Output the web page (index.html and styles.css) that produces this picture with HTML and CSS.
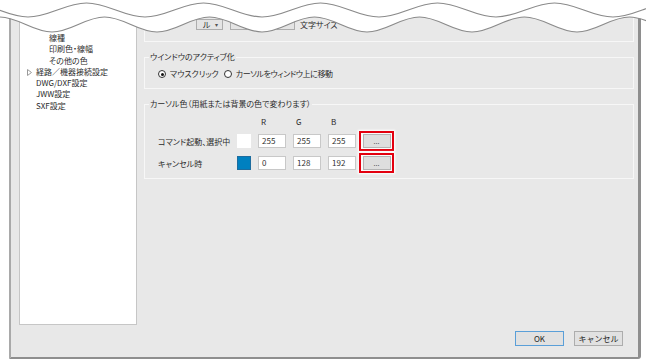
FILE: index.html
```html
<!DOCTYPE html>
<html lang="ja">
<head>
    <meta charset="UTF-8">
    <title>設定</title>
    <link rel="stylesheet" href="styles.css">
</head>
<body>

    <!-- Dialog -->
    <div class="dialog">
        <div class="main">

            <!-- Left tree -->
            <div class="tree">
                <div class="item lv2">線種</div>
                <div class="item lv2">印刷色・線幅</div>
                <div class="item lv2">その他の色</div>
                <div class="item lv1 closed">
                    <svg class="twisty" width="5" height="7" viewBox="0 0 5 7"><path d="M0.5 0.5 L4.5 3.5 L0.5 6.5 Z" fill="none" stroke="#9a9a9a" stroke-width="1"/></svg>経路／機器接続設定
                </div>
                <div class="item lv1">DWG/DXF設定</div>
                <div class="item lv1">JWW設定</div>
                <div class="item lv1">SXF設定</div>
            </div>

            <!-- Right panel -->
            <div class="panel">
                <div class="group group-top">
                    <div class="top-row">
                        <span class="combo">ル<span class="arrow">▾</span></span>
                        <span class="combo wide"></span>
                        <span class="top-label">文字サイズ</span>
                    </div>
                </div>

                <div class="group group-active">
                    <div class="group-title">ウインドウのアクティブ化</div>
                    <div class="radios">
                        <label class="radio"><span class="dot checked"></span>マウスクリック</label>
                        <label class="radio"><span class="dot"></span>カーソルをウィンドウ上に移動</label>
                    </div>
                </div>

                <div class="group group-color">
                    <div class="group-title">カーソル色（用紙または背景の色で変わります）</div>
                    <div class="color-grid">
                        <div class="head"></div>
                        <div class="head"></div>
                        <div class="head">R</div>
                        <div class="head">G</div>
                        <div class="head">B</div>
                        <div class="head"></div>

                        <div class="row-label">コマンド起動、選択中</div>
                        <div><span class="swatch" style="background:#ffffff"></span></div>
                        <div><span class="num">255</span></div>
                        <div><span class="num">255</span></div>
                        <div><span class="num">255</span></div>
                        <div class="mark"><span class="pick">...</span></div>

                        <div class="row-label">キャンセル時</div>
                        <div><span class="swatch blue" style="background:#0080c0"></span></div>
                        <div><span class="num">0</span></div>
                        <div><span class="num">128</span></div>
                        <div><span class="num">192</span></div>
                        <div class="mark"><span class="pick">...</span></div>
                    </div>
                </div>
            </div>
        </div>

        <!-- Footer buttons -->
        <div class="footer">
            <button class="btn default">OK</button>
            <button class="btn">キャンセル</button>
        </div>
    </div>

    <!-- torn top edge -->
    <svg class="tear" width="646" height="36" viewBox="0 0 646 36">
        <path d="M-53,32 C-34,32 -19.5,17 -0.5,17 S33,32 52,32 S85.5,17 104.5,17 S138,32 157,32 S190.5,17 209.5,17 S243,32 262,32 S295.5,17 314.5,17 S348,32 367,32 S400.5,17 419.5,17 S453,32 472,32 S505.5,17 524.5,17 S558,32 577,32 S610.5,17 629.5,17 S663,32 682,32 L682,0 L-53,0 Z" fill="#ffffff"/>
        <path d="M-53,32 C-34,32 -19.5,17 -0.5,17 S33,32 52,32 S85.5,17 104.5,17 S138,32 157,32 S190.5,17 209.5,17 S243,32 262,32 S295.5,17 314.5,17 S348,32 367,32 S400.5,17 419.5,17 S453,32 472,32 S505.5,17 524.5,17 S558,32 577,32 S610.5,17 629.5,17 S663,32 682,32" fill="none" stroke="#8a8a8a" stroke-width="1.2"/>
        <path d="M-30.5,3 C-9.5,3 7,17 28,17 S65.5,3 86.5,3 S124,17 145,17 S182.5,3 203.5,3 S241,17 262,17 S299.5,3 320.5,3 S358,17 379,17 S416.5,3 437.5,3 S475,17 496,17 S533.5,3 554.5,3 S592,17 613,17 S650.5,3 671.5,3" fill="none" stroke="#8a8a8a" stroke-width="1.2"/>
    </svg>

</body>
</html>
```

FILE: styles.css
```css
/* page */
body { margin: 0; width: 646px; height: 362px; overflow: hidden; position: relative; background: #fff; font-family: "Noto Sans CJK JP", "Noto Sans", sans-serif; font-size: 8px; color: #2b2b2b; font-feature-settings: "palt"; }

.dialog { margin-left: 9px; width: 627px; height: 357px; background: #e8e8e8; border-left: 2px solid #a9a9a9; border-right: 3px solid #8e8e8e; border-bottom: 2px solid #8e8e8e; border-bottom-right-radius: 3px; display: flex; flex-direction: column; }
.main { display: flex; height: 325px; padding-left: 8px; gap: 7px; }

/* tree */
.tree { box-sizing: border-box; width: 118px; background: #fff; border: 1px solid #c6c6c6; border-top: none; padding-top: 32px; }
.item { line-height: 11.3px; height: 11.3px; white-space: nowrap; }
.lv2 { padding-left: 29px; }
.lv1 { padding-left: 16px; }
.lv1.closed { padding-left: 7px; }
.twisty { display: inline-block; vertical-align: -1px; margin-right: 4px; }

/* panel + group boxes */
.panel { width: 490px; }
.group { border: 1px solid #f7f7f7; }
.group-title { width: fit-content; margin: -6px 0 0 4px; padding: 0 1px; line-height: 10px; background: #e8e8e8; }
.group-top { margin-top: 4px; height: 36px; }
.top-row { display: flex; align-items: center; padding: 14px 0 0 51px; }
.combo { box-sizing: border-box; width: 27px; height: 11px; background: #e4e4e4; border: 1px solid #adadad; display: flex; align-items: center; justify-content: space-between; padding: 0 4px 0 6px; line-height: 9px; }
.combo.wide { width: 65px; margin-left: 7px; }
.arrow { font-size: 6px; color: #555; }
.top-label { margin-left: 5px; }

.group-active { margin-top: 15px; padding-bottom: 9px; }
.radios { display: flex; gap: 5px; padding-left: 13px; margin-top: 7px; line-height: 10px; }
.radio { display: flex; align-items: center; gap: 4px; }
.radio:last-child { letter-spacing: -0.4px; }
.dot { box-sizing: border-box; width: 8px; height: 8px; border: 1px solid #333; border-radius: 50%; background: #fff; display: flex; align-items: center; justify-content: center; }
.dot.checked::after { content: ""; width: 3px; height: 3px; border-radius: 50%; background: #111; }

.group-color { margin-top: 15px; padding-bottom: 5px; }
.color-grid { display: grid; grid-template-columns: 79px 21px 35px 35px 31px 35px; grid-template-rows: 12px 20px 20px; row-gap: 2px; padding-left: 13px; margin-top: 8px; align-items: center; }
.head { align-self: start; line-height: 10px; padding-left: 3px; }
.row-label { white-space: nowrap; }
.swatch { display: block; box-sizing: border-box; width: 14px; height: 14px; }
.swatch.blue { border: 1px solid #1d6c9e; }
.num { display: block; box-sizing: border-box; width: 28px; height: 14px; background: #fff; border: 1px solid #c8c8c8; padding-left: 3px; line-height: 12px; color: #333; }
.mark { box-sizing: border-box; width: 35px; height: 20px; border: 2px solid #e3000f; background: #fbfbfb; display: flex; align-items: center; justify-content: center; box-shadow: 0 0 2px 1px #fff; }
.pick { box-sizing: border-box; width: 28px; height: 14px; background: #dedede; border: 1px solid #b4b4b4; text-align: center; line-height: 12px; font-size: 7px; color: #444; }

/* footer */
.footer { display: flex; justify-content: flex-end; gap: 10px; padding: 6px 15px 0 0; }
.btn { box-sizing: border-box; width: 49px; height: 15px; margin: 0; padding: 0; background: #e1e1e1; border: 1px solid #adadad; font-family: inherit; font-size: 8px; color: #1e1e1e; line-height: 13px; }
.btn.default { border-color: #5a9fd8; }

/* torn edge over the top of the dialog */
.tear { position: absolute; top: 0; left: 0; }
```
